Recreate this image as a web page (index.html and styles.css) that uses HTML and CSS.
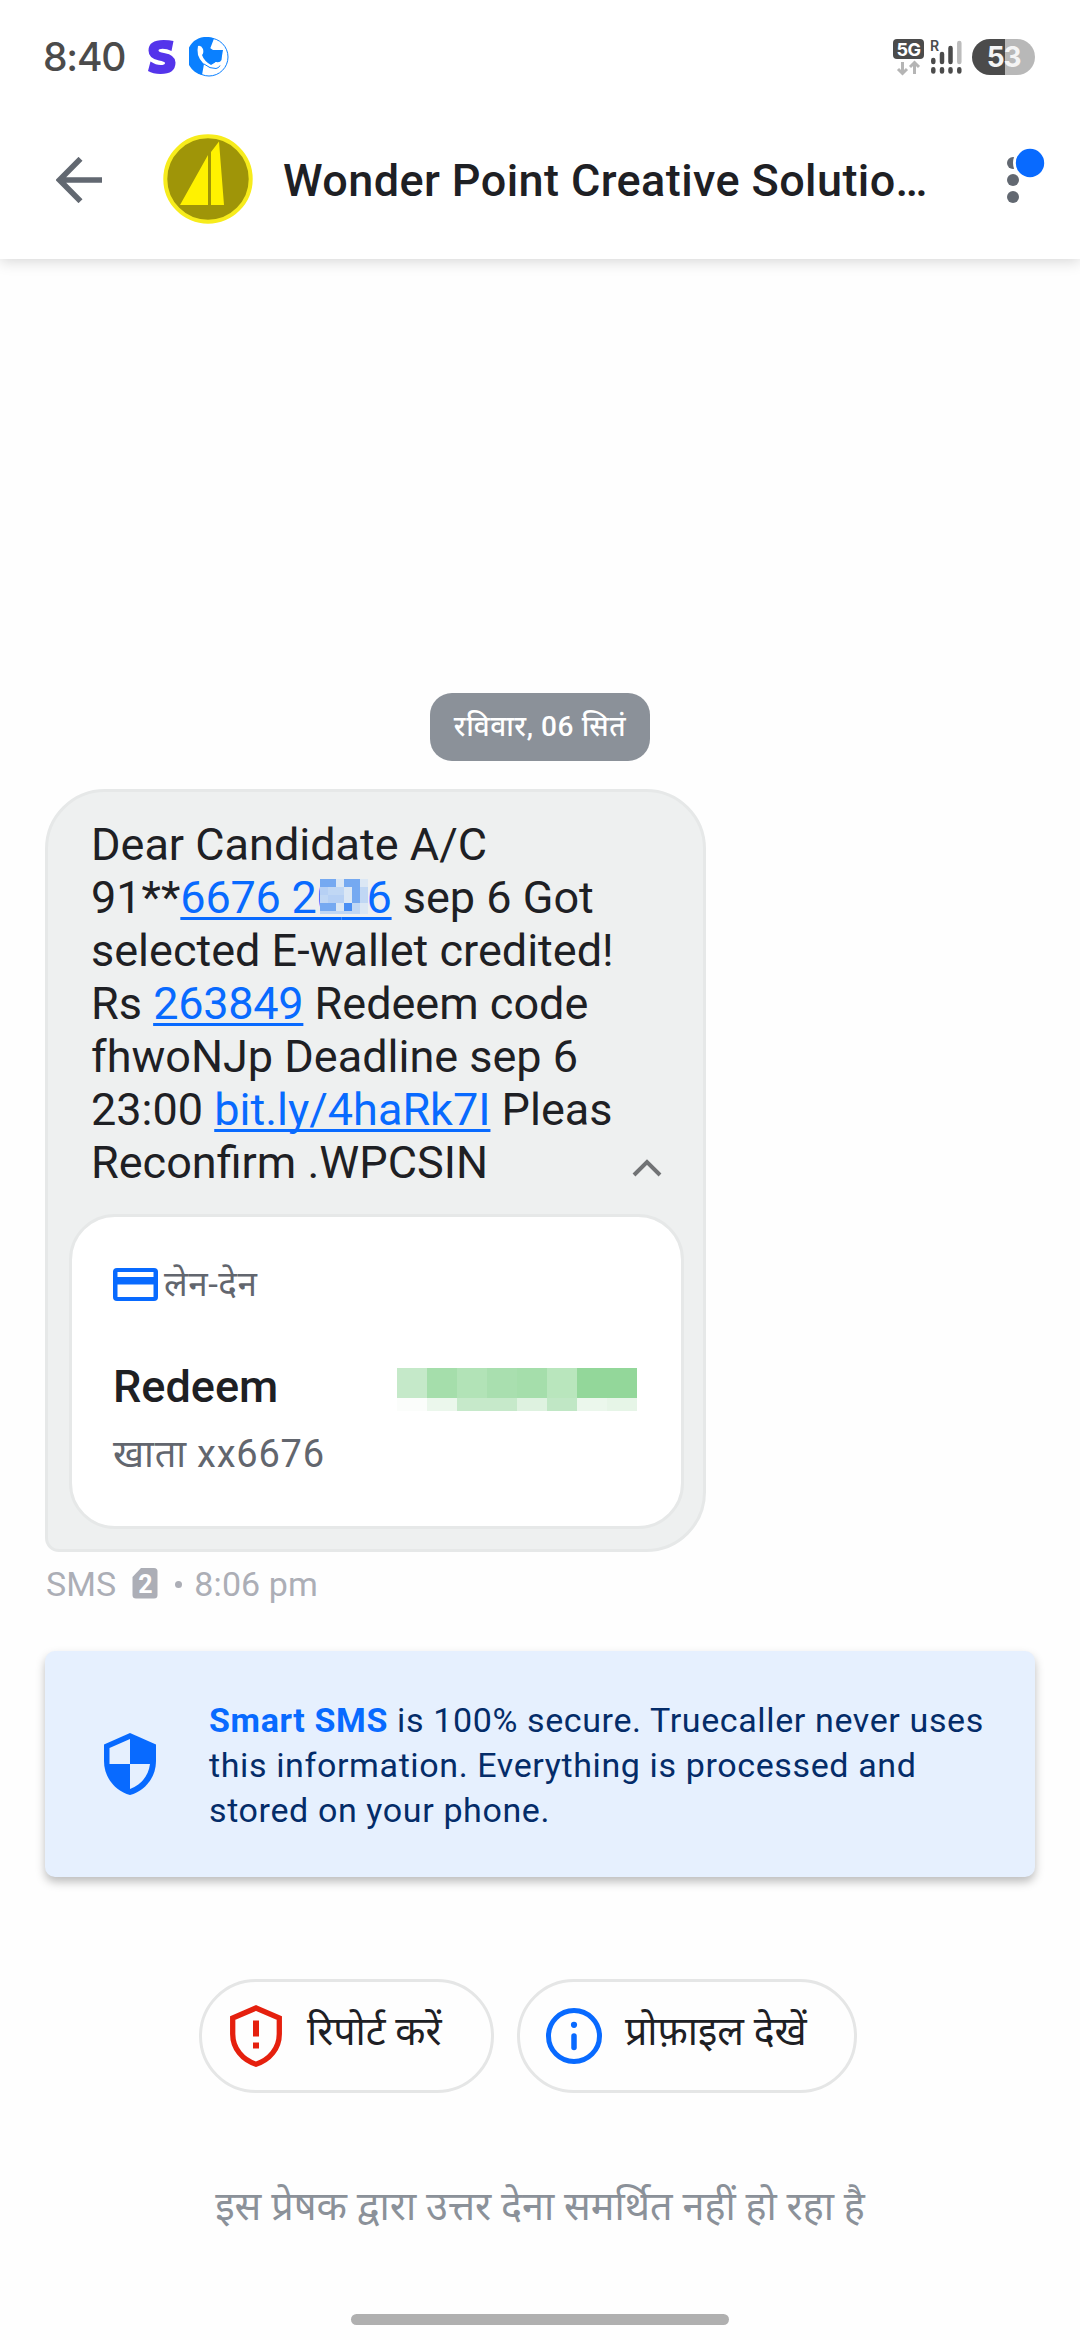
FILE: index.html
```html
<!DOCTYPE html>
<html lang="hi">
<head>
<meta charset="utf-8">
<title>Wonder Point Creative Solutions</title>
<link rel="stylesheet" href="styles.css">
</head>
<body>
<div class="screen">
  <header class="top">
    <div class="status">
      <span class="clock">8:40</span>
      <svg class="s-logo" width="30" height="36" viewBox="0 0 30 36"><path d="M26.500 2L24.500 12Q20 9.800 15.500 9.800Q11.500 9.800 11.500 11.500Q11.500 13 17 14Q28.500 16 28.500 23.500Q28.500 35 13.500 35Q6 35 1 32L3.500 22.500Q9 26 13.500 26Q18 26 18 24Q18 22.500 12 21.500Q1.500 19.500 1.500 11.500Q1.500 1 16.500 1Q22.500 1 26.500 2Z" fill="#5434eb"/></svg>
      <svg class="call-logo" width="40" height="40" viewBox="0 0 40 40"><circle cx="20" cy="20" r="19" fill="#fff" stroke="#0a80ff" stroke-width="1"/><path d="M25 1.500A19.300 19.300 0 1 0 13 38L15 27L21 12Z" fill="#0a80ff"/><path d="M15 13L21 11L24 13H34Q33 18 32.500 23Q31 26 27 25L21 30L13 24Z" fill="#0a80ff"/><path d="M9 9Q12 8 14 12Q15 16 13 18Q15 24 22 28L27 25Q31 27 31 30Q27 33 22 31Q12 27 9 18Q8 13 9 9Z" fill="#fff"/><path d="M15 27Q21 32 27 31.500Q30 31 31 28.500" fill="none" stroke="#0a80ff" stroke-width="1"/></svg>
      <span class="grow"></span>
      <svg class="net" width="70" height="40" viewBox="0 0 70 40"><rect x="1" y="2" width="31" height="20" rx="4" fill="#4b4b4b"/><text x="16.500" y="18.500" text-anchor="middle" class="t5g">5G</text><path d="M10.500 25V36M6 32L10.500 36.500L15 32M22.500 37V26M18 30L22.500 25.500L27 30" fill="none" stroke="#b5b5b5" stroke-width="3"/><text x="38" y="14" class="tr">R</text><g stroke="#4b4b4b" stroke-width="4.500" stroke-linecap="round"><path d="M41.300 23V25M50 17V25M58.500 11V25M41.300 32.300V34.500M50 32.300V34.500M58.500 32.300V34.500M67.300 32.300V34.500"/><path d="M67.300 6V25" stroke="#bcbcbc"/></g></svg>
      <span class="battery">53</span>
    </div>
    <div class="bar">
      <svg class="back" width="46" height="46" viewBox="0 0 46 46"><path d="M24.500 1.800L3.500 23L24.500 44.200M3 23H46" fill="none" stroke="#626871" stroke-width="5.600"/></svg>
      <svg class="avatar" width="92" height="92" viewBox="0 0 92 92"><circle cx="46" cy="46" r="42.700" fill="#9f9508" stroke="#f7ec1c" stroke-width="4"/><path d="M18 72L46 22V72ZM49 72V19L57 8.500L62 72Z" fill="#fff200"/></svg>
      <h1 class="title">Wonder Point Creative Solutio…</h1>
      <svg class="more" width="48" height="60" viewBox="0 0 48 60"><g fill="#626871"><circle cx="12" cy="16" r="6"/><circle cx="12" cy="33" r="6"/><circle cx="12" cy="50" r="6"/></g><circle cx="29" cy="16" r="17" fill="#fff"/><circle cx="29" cy="16" r="14.200" fill="#086aff"/></svg>
    </div>
  </header>
  <main class="thread">
    <div class="date">रविवार, 06 सितं</div>
    <section class="bubble">
      <p class="msg">Dear Candidate A/C<br>91**<a class="num">6676 20<span class="mask"><svg width="48" height="35" viewBox="0 0 48 35" shape-rendering="crispEdges"><path fill="#c0d7f4" d="M0 0H48V35H0z"/><path fill="#75a9f1" d="M0 0H16V8H0zM24 0H40V8H24zM0 24H16V32H0zM32 8H40V24H32z"/><path fill="#b6d0f4" d="M0 8H8V16H0zM8 16H24V24H8z"/><path fill="#dbe7f4" d="M16 0H24V8H16zM40 0H48V8H40zM24 8H32V24H24zM16 24H24V32H16zM40 24H48V35H40z"/><path fill="#4a8ff4" d="M24 24H32V32H24z"/></svg></span>26</a> sep 6 Got<br>selected E-wallet credited!<br>Rs <a class="num">263849</a> Redeem code<br>fhwoNJp Deadline sep 6<br>23:00 <a>bit.ly/4haRk7I</a> Pleas<br>Reconfirm .WPCSIN</p>
      <svg class="chev" width="30" height="20" viewBox="0 0 30 20"><path d="M2 17L15 4L28 17" fill="none" stroke="#717375" stroke-width="4"/></svg>
      <div class="card">
        <div class="kind"><svg width="45" height="33" viewBox="0 0 45 33"><rect width="45" height="33" rx="4" fill="#086aff"/><path d="M4.500 4H40.500V9H4.500zM4.500 16.500H40.500V29H4.500z" fill="#fff"/></svg><span>लेन-देन</span></div>
        <div class="row"><b>Redeem</b><svg width="240" height="43" viewBox="0 0 240 43" shape-rendering="crispEdges"><path fill="#c5e9c9" d="M0 0H30V30H0z"/><path fill="#a5deab" d="M30 0H60V30H30zM120 0H150V30H120z"/><path fill="#b2e3b7" d="M60 0H90V30H60z"/><path fill="#a9dfaf" d="M90 0H120V30H90z"/><path fill="#b9e6bd" d="M150 0H180V30H150z"/><path fill="#93d79a" d="M180 0H240V30H180z"/><path fill="#fbfdfb" d="M0 30H30V43H0z"/><path fill="#ebf7ec" d="M30 30H60V43H30zM180 30H210V43H180z"/><path fill="#c6e9ca" d="M60 30H120V43H60z"/><path fill="#def2e0" d="M120 30H150V43H120z"/><path fill="#c0e7c5" d="M150 30H180V43H150z"/><path fill="#e6f5e7" d="M210 30H240V43H210z"/></svg></div>
        <div class="acct">खाता xx6676</div>
      </div>
    </section>
    <div class="meta"><span>SMS</span><svg width="26" height="31" viewBox="0 0 26 31"><path d="M9 0H22Q25.500 0 25.500 3.500V27Q25.500 30.500 22 30.500H4Q.5 30.500 .5 27V9Z" fill="#acaeb6"/><text x="13.500" y="24.500" text-anchor="middle" class="sim">2</text></svg><i class="dot"></i><span>8:06 pm</span></div>
    <aside class="secure">
      <svg width="52" height="62" viewBox="0 0 52 62"><path d="M26 0L52 11.500V28C52 45 40.500 58 26 62C11.500 58 0 45 0 28V11.500Z" fill="#086aff"/><path d="M26 6V31H5.500V15ZM26 31H46C44.500 43 37 52 26 56Z" fill="#e6f0fe"/></svg>
      <p><b>Smart SMS</b> is 100% secure. Truecaller never uses this information. Everything is processed and stored on your phone.</p>
    </aside>
    <div class="actions">
      <div class="btn report"><svg width="52" height="62" viewBox="0 0 52 62"><path d="M26 3L49.300 13V29C49.300 43.500 39.500 55 26 59.200C12.500 55 2.700 43.500 2.700 29V13Z" fill="none" stroke="#e5200e" stroke-width="5.300"/><path d="M23 15.500H29V31.500H23zM23 37.500H29V43.500H23z" fill="#e5200e"/></svg><span>रिपोर्ट करें</span></div>
      <div class="btn profile"><svg width="56" height="56" viewBox="0 0 56 56"><circle cx="28" cy="28" r="25.500" fill="none" stroke="#086aff" stroke-width="5"/><circle cx="28" cy="16.800" r="3.100" fill="#086aff"/><path d="M28 28V39.500" stroke="#086aff" stroke-width="5.500" stroke-linecap="round"/></svg><span>प्रोफ़ाइल देखें</span></div>
    </div>
    <p class="note">इस प्रेषक द्वारा उत्तर देना समर्थित नहीं हो रहा है</p>
  </main>
  <div class="home"></div>
</div>
</body>
</html>
```

FILE: styles.css
```css
* { box-sizing: border-box; }
body { margin: 0; background: #fefefe; font-family: Roboto, "Noto Sans", "Noto Sans Devanagari", sans-serif; color: #1e2024; }
p, h1 { margin: 0; }
svg { display: block; flex: none; }
.screen { width: 1080px; height: 2340px; display: flex; flex-direction: column; overflow: hidden; }
.top { height: 259px; background: #fff; box-shadow: 0 2px 14px rgba(0,0,0,.17); }
.status { height: 114px; padding: 0 45px 0 43px; display: flex; align-items: center; }
.clock { font: 500 39px/40px Inter, sans-serif; letter-spacing: -1.2px; color: #4b4b4b; width: 104px; }
.call-logo { margin-left: 12px; }
.grow { flex: 1; }
.net { margin-right: 10px; }
.t5g { font: 700 18px Inter, sans-serif; fill: #fff; letter-spacing: -.5px; }
.tr { font: 600 14px Inter, sans-serif; fill: #4b4b4b; }
.battery { width: 63px; height: 36px; border-radius: 18px; background: linear-gradient(90deg, #4b4b4b 33px, #b8b8b8 33px); color: #f4f4f4; font: 700 28px/37px Inter, sans-serif; letter-spacing: -1.2px; text-align: center; }
.bar { height: 132px; padding: 0 31px 0 56px; display: flex; align-items: center; }
.avatar { margin-left: 60px; margin-bottom: 2px; }
.title { margin-left: 29px; flex: 1; white-space: nowrap; font-size: 45px; line-height: 54px; font-weight: 500; letter-spacing: .4px; padding-top: 2px; }
.more { margin-bottom: 6px; }
.thread { flex: 1; padding: 434px 45px 0; display: flex; flex-direction: column; align-items: flex-start; }
.date { align-self: center; width: 220px; height: 68px; border-radius: 22px; background: #8b9199; color: #fff; font-weight: 500; font-size: 28px; letter-spacing: .6px; line-height: 67px; text-align: center; white-space: nowrap; }
.bubble { margin-top: 28px; width: 661px; height: 763px; border: 3px solid #e6e8e8; border-radius: 60px 60px 60px 14px; background: #eef0f0; padding: 26px 19px 0 21px; display: grid; grid-template-columns: 1fr auto; align-content: start; }
.msg { grid-area: 1 / 1; padding-left: 22px; font-size: 45px; line-height: 53px; white-space: nowrap; }
.msg a { color: #086aff; text-decoration: underline; text-decoration-thickness: 2.500px; text-underline-offset: 4px; text-decoration-skip-ink: none; position: relative; }
.msg .num { letter-spacing: -.25px; }
.mask { position: absolute; left: 140px; top: 8px; }
.chev { grid-area: 1 / 2; align-self: end; margin: 0 22px 11px 0; }
.card { grid-column: 1 / 3; margin-top: 25px; height: 315px; border: 3px solid #e6e8e8; border-radius: 46px; background: #fff; padding: 39px 44px 0 41px; }
.kind { display: flex; align-items: center; gap: 6px; height: 56px; color: #62666e; font-size: 35px; letter-spacing: .5px; }
.kind span { margin-bottom: 4px; }
.row { display: flex; align-items: center; justify-content: space-between; height: 54px; margin-top: 47px; }
.row b { font-size: 45px; font-weight: 500; }
.row svg { margin-top: 6px; }
.acct { margin-top: 16px; font-size: 38px; line-height: 50px; letter-spacing: .75px; color: #62666e; }
.meta { margin-top: 12px; height: 40px; display: flex; align-items: center; font-size: 34px; letter-spacing: .1px; color: #acaeb6; padding-left: 1px; }
.meta svg { margin-left: 16px; margin-bottom: 2px; }
.sim { font: 700 25px Roboto, sans-serif; fill: #fff; }
.dot { width: 7px; height: 7px; border-radius: 50%; background: #acaeb6; margin: 0 12px 0 17px; }
.secure { margin-top: 47px; width: 990px; height: 226px; border-radius: 10px; background: #e6f0fe; box-shadow: 0 5px 10px rgba(0,0,0,.26); display: flex; align-items: center; padding: 0 0 0 59px; gap: 53px; color: #042c69; font-size: 34px; line-height: 45px; letter-spacing: .62px; }
.secure p { width: 790px; padding-top: 2px; }
.secure b { color: #086aff; font-weight: 700; }
.actions { margin: 102px 0 0 154px; display: flex; gap: 23px; height: 114px; }
.btn { border: 3px solid #e5e6e6; border-radius: 57px; display: flex; align-items: center; white-space: nowrap; font-size: 39.300px; }
.btn span { margin-bottom: 12px; }
.report { width: 295px; padding-left: 28px; gap: 25px; }
.profile { width: 340px; padding-left: 26px; gap: 23px; }
.note { align-self: center; margin-top: 86px; font-size: 39.600px; line-height: 56px; color: #8b9199; white-space: nowrap; }
.home { width: 378px; height: 11px; margin: 0 auto 15px; border-radius: 6px; background: #b0b0b0; flex: none; }
```
